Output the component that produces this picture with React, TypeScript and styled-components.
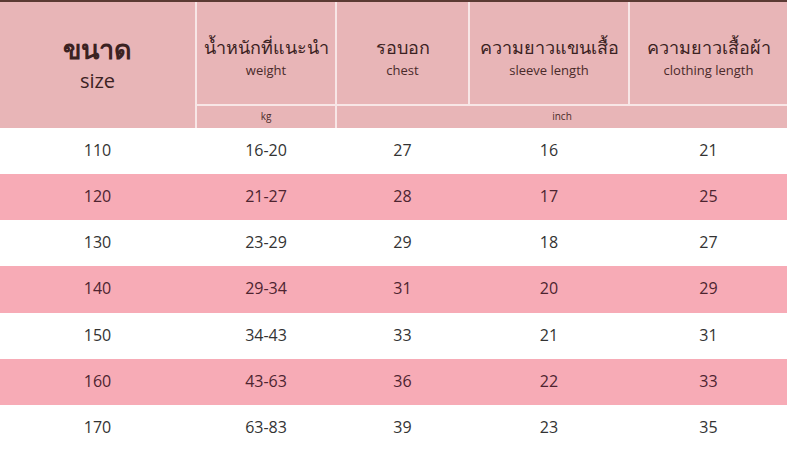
import React from "react";
import styled, { createGlobalStyle } from "styled-components";

const Global = createGlobalStyle`
  html, body { margin: 0; padding: 0; background: #ffffff; }
  body { font-family: "Open Sans", "Noto Sans", sans-serif; }
`;

const cols = "195px 138px 131px 158px 157px";

const Page = styled.div`
  width: 800px;
  height: 451px;
  overflow: hidden;
  background: #fff;
`;

const Table = styled.div`
  width: 787px;
  display: flex;
  flex-direction: column;
`;

const Header = styled.div`
  display: grid;
  grid-template-columns: ${cols};
  grid-template-rows: 102px 22px;
  gap: 2px;
  background: #f8e6e6;
  border-top: 2px solid #5b3a33;
`;

const HeadCell = styled.div<{ $span?: string; $rows?: string; $pad?: string }>`
  background: #e8b5b7;
  display: flex;
  flex-direction: column;
  align-items: center;
  justify-content: center;
  box-sizing: border-box;
  color: #3b2222;
  padding: ${(p) => p.$pad || "0"};
  grid-column: ${(p) => p.$span || "auto"};
  grid-row: ${(p) => p.$rows || "auto"};
`;

const SizeTh = styled.div`
  font-size: 27px;
  font-weight: 700;
  line-height: 30px;
  margin-bottom: 5px;
`;

const SizeEn = styled.div`
  font-size: 20px;
  line-height: 24px;
`;

const ThTitle = styled.div`
  font-size: 18px;
  line-height: 22px;
  margin-bottom: 4px;
`;

const EnTitle = styled.div`
  font-size: 13px;
  line-height: 16px;
  color: #4a2a2a;
`;

const Unit = styled.div`
  font-size: 10px;
  line-height: 14px;
  color: #4a2a2a;
`;

const Body = styled.div`
  display: flex;
  flex-direction: column;
  height: 323px;
`;

const Row = styled.div<{ $pink: boolean }>`
  flex: 1;
  display: grid;
  grid-template-columns: ${cols};
  column-gap: 2px;
  align-items: center;
  background: ${(p) => (p.$pink ? "#f7abb6" : "#ffffff")};
  color: ${(p) => (p.$pink ? "#4d2430" : "#333333")};
`;

const Cell = styled.div`
  text-align: center;
  font-size: 16px;
  margin-top: -2px;
`;

const data = [
  ["110", "16-20", "27", "16", "21"],
  ["120", "21-27", "28", "17", "25"],
  ["130", "23-29", "29", "18", "27"],
  ["140", "29-34", "31", "20", "29"],
  ["150", "34-43", "33", "21", "31"],
  ["160", "43-63", "36", "22", "33"],
  ["170", "63-83", "39", "23", "35"],
];

const titles = [
  ["น้ำหนักที่แนะนำ", "weight"],
  ["รอบอก", "chest"],
  ["ความยาวแขนเสื้อ", "sleeve length"],
  ["ความยาวเสื้อผ้า", "clothing length"],
];

export default function App() {
  return (
    <Page>
      <Global />
      <Table>
        <Header>
          <HeadCell $rows="1 / 3" $pad="0 0 4px">
            <SizeTh>ขนาด</SizeTh>
            <SizeEn>size</SizeEn>
          </HeadCell>
          {titles.map(([th, en]) => (
            <HeadCell key={en} $pad="8px 0 0">
              <ThTitle>{th}</ThTitle>
              <EnTitle>{en}</EnTitle>
            </HeadCell>
          ))}
          <HeadCell $pad="0 0 3px">
            <Unit>kg</Unit>
          </HeadCell>
          <HeadCell $span="3 / 6" $pad="0 0 3px">
            <Unit>inch</Unit>
          </HeadCell>
        </Header>
        <Body>
          {data.map((r, i) => (
            <Row key={r[0]} $pink={i % 2 === 1}>
              {r.map((v, j) => (
                <Cell key={j}>{v}</Cell>
              ))}
            </Row>
          ))}
        </Body>
      </Table>
    </Page>
  );
}
